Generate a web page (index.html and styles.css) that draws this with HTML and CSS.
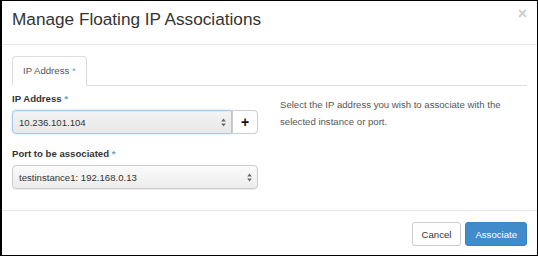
FILE: index.html
```html
<!DOCTYPE html>
<html lang="en">
<head>
    <meta charset="UTF-8">
    <title>Manage Floating IP Associations</title>
    <link rel="stylesheet" href="styles.css">
</head>
<body>
    <div class="modal">
        <div class="modal-header">
            <h3 class="modal-title">Manage Floating IP Associations</h3>
            <span class="close">&times;</span>
        </div>

        <div class="modal-body">
            <ul class="nav-tabs">
                <li class="active">IP Address <span class="req">*</span></li>
            </ul>

            <div class="tab-content">
                <div class="col-left">
                    <div class="form-group">
                        <label>IP Address <span class="req">*</span></label>
                        <div class="input-group">
                            <div class="select focus">
                                <span>10.236.101.104</span>
                                <svg class="arrows" width="5" height="9" viewBox="0 0 5 9"><path d="M2.5 0.5 L4.8 3.6 L0.2 3.6 Z M2.5 8.5 L4.8 5.4 L0.2 5.4 Z" fill="#666"/></svg>
                            </div>
                            <button class="btn-add" type="button">+</button>
                        </div>
                    </div>

                    <div class="form-group">
                        <label>Port to be associated <span class="req">*</span></label>
                        <div class="select">
                            <span>testinstance1: 192.168.0.13</span>
                            <svg class="arrows" width="5" height="9" viewBox="0 0 5 9"><path d="M2.5 0.5 L4.8 3.6 L0.2 3.6 Z M2.5 8.5 L4.8 5.4 L0.2 5.4 Z" fill="#666"/></svg>
                        </div>
                    </div>
                </div>

                <div class="col-right">
                    <p class="help">Select the IP address you wish to associate with the selected instance or port.</p>
                </div>
            </div>
        </div>

        <div class="modal-footer">
            <button class="btn" type="button">Cancel</button>
            <button class="btn btn-primary" type="button">Associate</button>
        </div>
    </div>
</body>
</html>
```

FILE: styles.css
```css
:root {
    --text-color: #333;
    --muted-color: #555;
    --line-color: #e5e5e5;
    --primary-color: #428bca;
    --font-family: 'Liberation Sans', Arial, sans-serif;
}

* {
    box-sizing: border-box;
}

body {
    margin: 0;
    width: 538px;
    height: 256px;
    background: #000;
    font-family: var(--font-family);
    font-size: 9.6px;
    color: var(--text-color);
}

.modal {
    height: 254px;
    margin: 1px 1px 1px 2px;
    background: #fff;
    display: flex;
    flex-direction: column;
}

.modal-header {
    display: flex;
    justify-content: space-between;
    align-items: flex-start;
    padding: 8px 10px 15px 10px;
    border-bottom: 1px solid var(--line-color);
}

.modal-title {
    margin: 0;
    font-size: 17.2px;
    font-weight: normal;
    line-height: 20px;
    color: #333;
}

.close {
    font-size: 16px;
    font-weight: bold;
    line-height: 14px;
    color: #000;
    opacity: 0.2;
    margin-top: -2px;
}

.modal-body {
    flex: 1;
    padding: 11px 10px 0 10px;
}

.nav-tabs {
    list-style: none;
    margin: 0;
    padding: 0;
    display: flex;
    border-bottom: 1px solid #ddd;
}

.nav-tabs li {
    padding: 7px 10px;
    line-height: 14px;
    color: var(--muted-color);
    border: 1px solid #ddd;
    border-bottom-color: transparent;
    border-radius: 4px 4px 0 0;
    margin-bottom: -1px;
    background: #fff;
}

.req {
    color: #5aa5d6;
}

.tab-content {
    display: flex;
    gap: 22px;
    padding-top: 7px;
}

.col-left {
    width: 246px;
}

.col-right {
    flex: 1;
}

.form-group {
    margin-bottom: 14px;
}

label {
    display: block;
    font-weight: bold;
    line-height: 12px;
    margin-bottom: 5px;
}

.input-group {
    display: flex;
}

.select {
    flex: 1;
    height: 24px;
    display: flex;
    align-items: center;
    justify-content: space-between;
    padding: 0 5px 0 6px;
    border: 1px solid #ccc;
    border-radius: 4px;
    background: linear-gradient(#fbfbfb, #ececec);
    box-shadow: 0 1px 1px rgba(0, 0, 0, 0.08);
    color: var(--text-color);
}

.select.focus {
    border-color: #a9cbe8;
    border-radius: 4px 0 0 4px;
    background: linear-gradient(#f4f4f4, #e8e8e8);
    box-shadow: inset 0 1px 1px rgba(0, 0, 0, 0.06), 0 0 2px rgba(102, 175, 233, 0.5);
}

.btn-add {
    width: 26px;
    height: 24px;
    padding: 0;
    border: 1px solid #ccc;
    border-radius: 0 4px 4px 0;
    background: #fff;
    font-family: var(--font-family);
    font-size: 14px;
    font-weight: bold;
    line-height: 20px;
    color: #111;
}

.help {
    margin: 4px 0 0;
    line-height: 16.5px;
    color: var(--muted-color);
}

.modal-footer {
    display: flex;
    justify-content: flex-end;
    gap: 4px;
    padding: 11px 10px 9px 10px;
    border-top: 1px solid var(--line-color);
}

.btn {
    height: 24px;
    padding: 0 9px;
    border: 1px solid #ccc;
    border-radius: 3px;
    background: #fff;
    font-family: var(--font-family);
    font-size: 9.6px;
    color: var(--text-color);
}

.btn-primary {
    background: var(--primary-color);
    border-color: #3c82c0;
    color: #fff;
}
```
